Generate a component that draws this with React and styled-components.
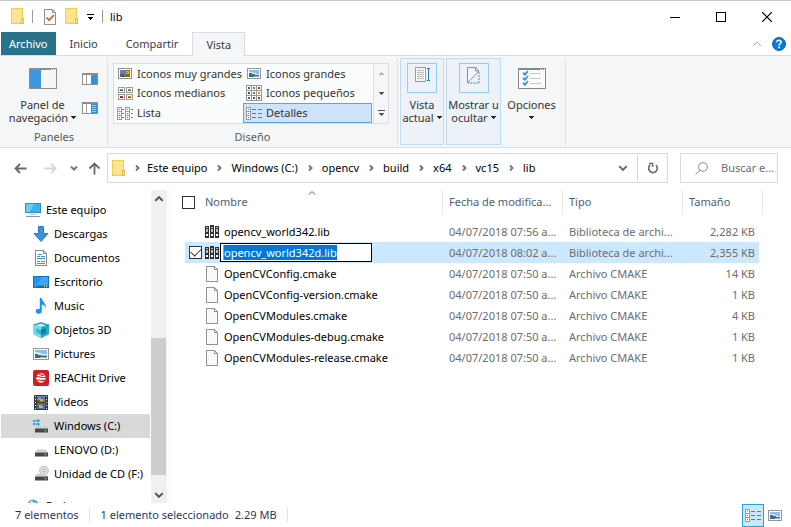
import React, { useEffect, useRef } from "react";
import styled, { createGlobalStyle, css } from "styled-components";

const Global = createGlobalStyle`
  * { box-sizing: border-box; }
  body { margin: 0; background: #fff; }
  body, button, input, table {
    font-family: "Noto Sans", "Open Sans", sans-serif;
    font-size: 11px;
    line-height: 16px;
    color: #000;
  }
  button { padding: 0; border: 0; background: none; }
  svg { display: block; flex: none; }
`;

/* ---------- icons ---------- */

const Icon = ({ w, h = w, children, smooth }) => (
  <svg width={w} height={h} viewBox={`0 0 ${w} ${h}`} fill="none" shapeRendering={smooth ? "auto" : "crispEdges"} aria-hidden="true">
    {children}
  </svg>
);

const FolderIcon = () => (
  <Icon w={14} h={17}>
    <path d="M0.5 0.5h11v11h1v4h-12z" fill="#fde58f" stroke="#f0cb5b" />
    <path d="M10.5 10.5h2v5h-2z" fill="#ffe79a" stroke="#e5bb49" />
    <path d="M1 13h9v2H1z" fill="#fbdf83" />
  </Icon>
);

const PropertiesIcon = () => (
  <Icon w={12} h={16} smooth>
    <path d="M0.5 0.5h8l3 3v12h-11z" fill="#f7f8f9" stroke="#8b8f94" />
    <path d="M8.5 0.5v3h3" stroke="#8b8f94" />
    <path d="M2.5 8.5l2.5 2.5 5-5" stroke="#e2562b" strokeWidth="1.7" />
  </Icon>
);

const Caret = ({ color = "#222" }) => (
  <Icon w={5} h={3}><path d="M0 0h5v1H4v1H3v1H2V2H1V1H0z" fill={color} /></Icon>
);

const CaretUp = () => (
  <Icon w={5} h={3}><path d="M2 0h1v1h1v1h1v1H0V2h1V1h1z" fill="#a9b0bb" /></Icon>
);

const CaretBar = ({ color = "#000" }) => (
  <Icon w={7} h={6}><path d="M0 0h7v1H0zM1 3h5v1H5v1H4v1H3V5H2V4H1z" fill={color} /></Icon>
);

const Chevron = ({ dir, color = "#777", size = 8, weight = 2 }) => {
  const d = {
    right: "M3 1.5L5.5 4L3 6.5",
    down: "M1 2.5L4 5.5L7 2.5",
    up: "M1 5.5L4 2.5L7 5.5",
  }[dir];
  return (
    <svg width={size} height={size} viewBox="0 0 8 8" fill="none" aria-hidden="true">
      <path d={d} stroke={color} strokeWidth={(weight * 8) / size} />
    </svg>
  );
};

const Arrow = ({ dir, color }) => (
  <Icon w={13} h={13} smooth>
    <path
      d={{ left: "M12.5 6.5H1.5M6 2L1.5 6.5L6 11", right: "M0.5 6.5H11.5M7 2L11.5 6.5L7 11", up: "M6.5 12.5V1.5M1.5 6.5L6.5 1.5L11.5 6.5" }[dir]}
      stroke={color}
      strokeWidth="1.8"
    />
  </Icon>
);

const MinIcon = () => <Icon w={10}><path d="M0 5h10v1H0z" fill="#000" /></Icon>;
const MaxIcon = () => <Icon w={10}><path d="M0.5 0.5h9v9h-9z" stroke="#000" /></Icon>;
const CloseIcon = () => <Icon w={10} smooth><path d="M0 0L10 10M10 0L0 10" stroke="#000" strokeWidth="1.2" /></Icon>;

const HelpIcon = () => (
  <Icon w={14} smooth>
    <circle cx="7" cy="7" r="6.5" fill="#0a7ad6" stroke="#0765b5" />
    <path d="M4.8 5.2C4.9 2.6 9.2 2.7 9.2 5.1C9.2 6.7 7.1 6.6 7.1 8.5" stroke="#fff" strokeWidth="1.5" />
    <path d="M6.2 9.6h1.8v1.7H6.2z" fill="#fff" />
  </Icon>
);

const NavPaneIcon = () => (
  <Icon w={28} h={21}>
    <path d="M0.5 0.5h27v20h-27z" fill="#f5f5f5" stroke="#8b8e91" />
    <path d="M0 0h28v2H0z" fill="#8b8e91" />
    <path d="M22 1h1M24 1h1M26 1h1" stroke="#fff" />
    <path d="M1 2h11v18H1z" fill="#3f97e0" />
    <path d="M12 2h1v18h-1z" fill="#fff" />
  </Icon>
);

const SmallPaneIcon = ({ lines }) => (
  <Icon w={16} h={12}>
    <path d="M0.5 0.5h15v11h-15z" fill="#fff" stroke="#8b8e91" />
    <path d="M0 0h16v2H0z" fill="#8b8e91" />
    <path d="M4 2h1v9H4z" fill="#a4a6a8" />
    <path d="M9 2h6v9H9z" fill="#3490df" />
    {lines && <path d="M10 3.5h4M10 5.5h4M10 7.5h4M10 9.5h4" stroke="#9fd0f7" />}
  </Icon>
);

const PictureIcon = ({ w = 14, h = 11 }) => (
  <Icon w={w} h={h}>
    <path d={`M0.5 0.5h${w - 1}v${h - 1}h-${w - 1}z`} fill="#fff" stroke="#969696" />
    <path d={`M2 2h${w - 4}v${h - 4}H2z`} fill="#8dbdf0" />
    <path d={`M2 4h4v1h3v1h${w - 11}v1H2z`} fill="#d6e8f5" />
    <path d={`M2 ${h - 6}h3v1h3v1h${w - 10}v2H2z`} fill="#3e6f7c" />
    <path d={`M7 ${h - 3}h${w - 9}v1H7z`} fill="#8fb3d6" />
  </Icon>
);

const XLargeIcon = () => (
  <Icon w={14} h={11}>
    <path d="M0.5 0.5h13v10h-13z" fill="#fff" stroke="#8e8e8e" />
    <path d="M2 2h5v7H2z" fill="#5b7fc9" />
    <path d="M7 2h5v7H7z" fill="#8c6a1d" />
    <path d="M2 6h4v2H2z" fill="#b3304a" />
    <path d="M3 8h4v1H3z" fill="#31652d" />
    <path d="M8 3h3v3H8z" fill="#e8b822" />
    <path d="M9 4h1v1H9zM7 7h2v1H7z" fill="#c2321d" />
  </Icon>
);

const MediumIcon = () => (
  <Icon w={15} h={13}>
    {[[0, 0, "#5e9be0", "#2f5f5f"], [8, 0, "#6fa3d8", "#4b7a3f"], [0, 7, "#c2361f", "#7a1f1f"], [8, 7, "#c98b1f", "#2f4f9f"]].map(([x, y, a, b]) => (
      <g key={`${x}-${y}`}>
        <path d={`M${x + 0.5} ${y + 0.5}h6v5h-6z`} fill="#fff" stroke="#9a9a9a" />
        <path d={`M${x + 2} ${y + 2}h3v1h-3z`} fill={a} />
        <path d={`M${x + 2} ${y + 3}h3v1h-3z`} fill={b} />
      </g>
    ))}
  </Icon>
);

const dots = ["#3b7a4d", "#3a8ee0", "#c7371f", "#44607a", "#4f8a35", "#c99a22", "#2a6fbb", "#5b5b2a", "#a33b22"];
const SmallIcon = () => (
  <Icon w={16}>
    {dots.map((c, i) => {
      const x = (i % 3) * 5, y = Math.floor(i / 3) * 5;
      return (
        <g key={i}>
          <path d={`M${x + 0.5} ${y + 0.5}h5v5h-5z`} fill="#fff" stroke="#9a9a9a" />
          <path d={`M${x + 2} ${y + 2}h2v2h-2z`} fill={c} />
        </g>
      );
    })}
  </Icon>
);

const Strip = ({ x }) =>
  ["#3f8a8a", "#3a8ee0", "#d8331c"].map((c, i) => (
    <g key={i}>
      <path d={`M${x + 0.5} ${i * 4 + 0.5}h4v4h-4z`} fill="#fff" stroke="#9a9a9a" />
      <path d={`M${x + 2} ${i * 4 + 2}h1v1h-1z`} fill={c} />
    </g>
  ));

const ListIcon = () => (
  <Icon w={16} h={13}>
    <Strip x={0} />
    <Strip x={8} />
    <path d="M5 2.5h2M5 6.5h2M5 10.5h2M14 2.5h2M14 6.5h2M14 10.5h2" stroke="#777" />
  </Icon>
);

const DetailsIcon = () => (
  <Icon w={16} h={13}>
    <Strip x={0} />
    <path d="M6 2.5h4M12 2.5h4M6 6.5h4M12 6.5h4M6 10.5h4M12 10.5h4" stroke="#777" />
  </Icon>
);

const CurrentViewIcon = () => (
  <Icon w={15} h={15}>
    <path d="M0.5 0.5h10v14h-10z" fill="#fff" stroke="#9a9a9a" />
    <path d="M2 3.5h7M2 5.5h7M2 7.5h7M2 9.5h7M2 11.5h7" stroke="#b3b3b3" />
    <path d="M4.5 1v13M7.5 1v13" stroke="#dcdcdc" />
    <path d="M13.5 1v13M12 1.5h3M12 13.5h3" stroke="#1e7fd0" />
  </Icon>
);

const HideIcon = () => (
  <Icon w={13} h={17} smooth>
    <path d="M0.5 0.5h8v3.5h3.5L0.5 16z" fill="#f5f5f5" stroke="#8c8c8c" />
    <path d="M8.5 0.5L12 4" stroke="#8c8c8c" />
    <path d="M12 5v11H1" stroke="#2d8fe2" strokeDasharray="2 1" />
  </Icon>
);

const OptionsIcon = () => (
  <Icon w={28} h={21}>
    <path d="M0.5 0.5h27v20h-27z" fill="#fafafa" stroke="#858789" />
    <path d="M0 0h28v2H0z" fill="#858789" />
    <path d="M22 1h1M24 1h1M26 1h1" stroke="#fff" />
    {[3, 8, 13].map((y) => (
      <g key={y}>
        <path d={`M5 ${y + 1}h3v3H5z`} fill="#a6d1f5" />
        <path d={`M5 ${y + 2}l2 2 3 -4`} stroke="#2d88d6" strokeWidth="1.4" shapeRendering="auto" />
        <path d={`M12 ${y + 2.5}h11`} stroke="#c8c8c8" />
      </g>
    ))}
  </Icon>
);

const RefreshIcon = () => (
  <Icon w={12} smooth>
    <path d="M9 3.2A4.3 4.3 0 1 1 3.2 3" stroke="#6f6f6f" strokeWidth="1.7" />
    <path d="M2 1.5h3.6v3.6" stroke="#6f6f6f" strokeWidth="1.5" />
  </Icon>
);

const SearchIcon = () => (
  <Icon w={13} smooth>
    <circle cx="8" cy="5" r="4.4" stroke="#8a8a8a" />
    <path d="M5 8.2L0.5 12.5" stroke="#8a8a8a" />
  </Icon>
);

const MonitorIcon = () => (
  <Icon w={16}>
    <path d="M0.5 1.5h15v9h-15z" fill="#35b3f2" stroke="#3b88b5" />
    <path d="M1 2h8L5 10H1z" fill="#6dcbfa" />
    <path d="M5 12h6v1H5z" fill="#b9c6cf" />
    <path d="M1 14h14v1H1z" fill="#7f9cae" />
  </Icon>
);

const DownloadIcon = () => (
  <Icon w={16} smooth>
    <path d="M5.5 0.5h5v7h4.5L8 15.5L1 7.5h4.5z" fill="#3792e2" stroke="#2a7cc8" />
  </Icon>
);

const DocumentsIcon = () => (
  <Icon w={12} h={16}>
    <path d="M0.5 0.5h8l3 3v12h-11z" fill="#fff" stroke="#8a8a8a" />
    <path d="M8.5 0v3.5H12" stroke="#8a8a8a" />
    <path d="M2 6.5h3M6 6.5h4M2 8.5h8M2 11.5h3M6 11.5h4M2 13.5h8" stroke="#3a97e0" />
    <path d="M3 4.5h4" stroke="#3a97e0" />
  </Icon>
);

const DesktopIcon = () => (
  <Icon w={16} h={12}>
    <path d="M0.5 0.5h15v11h-15z" fill="#1c97f3" stroke="#126fc0" />
    <path d="M9 1h6v8H4z" fill="#3ba9f9" />
    <path d="M1 10h14v1H1z" fill="#0b66b5" />
    <path d="M2 10h1v1H2zM11 10h1v1h-1zM13 10h1v1h-1z" fill="#fff" />
  </Icon>
);

const MusicIcon = () => (
  <Icon w={12} h={16} smooth>
    <path d="M4.8 0h2C7 4 11.5 4.5 10.8 10.5C10.5 8.2 9 7 6.8 6.5V13C6.8 16.7 0.8 16.7 0.8 13.3C0.8 10.8 3 10.4 4.8 11z" fill="#1593ee" />
  </Icon>
);

const CubeIcon = () => (
  <Icon w={16} smooth>
    <path d="M0 2.5L8 0L16 2.5V12L8 16L0 12z" fill="#1faac4" />
    <path d="M0 2.5L8 5V16L0 12z" fill="#7fd8e8" />
    <path d="M16 2.5L8 5V16L16 12z" fill="#20a7c2" />
    <path d="M3 3.5L8 1.5L13 3.5L8 5z" fill="#c7f0f6" />
    <path d="M3 6L8 8V13L3 10.5z" fill="#38b8d0" />
    <path d="M8 8L13 6V10.5L8 13z" fill="#0e7f9b" />
  </Icon>
);

const ReachIcon = () => (
  <Icon w={16} smooth>
    <rect width="16" height="16" rx="2" fill="#cf1f26" />
    <circle cx="8" cy="8" r="4.7" fill="#fff" />
    <path d="M2.5 7C6 5 8 9.5 13 7M4 10.5C7 8.5 9 12 12 10M6 3.5C6.5 6 9.5 4.5 11 5.5" stroke="#cf1f26" strokeWidth="1.1" />
  </Icon>
);

const VideoIcon = () => (
  <Icon w={14} h={15}>
    <path d="M0 0h14v15H0z" fill="#3d3d3d" />
    <path d="M3 1h8v6H3z" fill="#4c86d8" />
    <path d="M3 8h8v6H3z" fill="#3f73bf" />
    <path d="M5 3h4v3H5zM5 10h4v3H5z" fill="#e2ab2b" />
    <path d="M7 2h2v2H7zM8 9h2v2H8z" fill="#b8451e" />
    <path d="M3 5h3v2H3zM3 12h2v2H3z" fill="#3c7a3c" />
    <path d="M1.5 1v14M12.5 1v14" stroke="#e6e6e6" strokeDasharray="1 2" />
  </Icon>
);

const DriveIcon = ({ kind }) => (
  <Icon w={16} h={16} smooth>
    {kind === "windows" && <path d="M0 2h2.5v2H0zM3.5 1.500h3v2.5h-3zM0 5h2.5v2H0zM3.5 5h3v2.500h-3z" fill="#18a6ee" />}
    {kind === "cd" && (
      <>
        <circle cx="11" cy="4.5" r="4.3" fill="#dfe3e6" stroke="#a3a8ac" strokeWidth="0.8" />
        <circle cx="11" cy="4.5" r="1.5" fill="#fff" stroke="#999" strokeWidth="0.8" />
      </>
    )}
    <path d="M4 7.5h9L15 10.5H2z" fill="#cfd2d5" />
    <path d="M2 10.5h13v4H2z" fill="#45494d" />
    <path d="M11.5 12h2v1.2h-2z" fill="#45e05e" />
  </Icon>
);

const NetworkIcon = () => (
  <Icon w={12} h={14} smooth>
    <circle cx="6" cy="6" r="5.5" fill="#4aa3d2" />
    <path d="M3 3C5 1 7 3 6 5C4 6 3 5 3 3zM8 3l2 2" fill="#c4e6f4" stroke="#c4e6f4" />
  </Icon>
);

const LibraryIcon = () => (
  <Icon w={14} h={13}>
    {[0, 5, 10].map((x, i) => (
      <g key={x}>
        <path d={`M${x} ${i === 1 ? 0 : 1}h4v${i === 1 ? 13 : 12}h-4z`} fill="#303030" />
        <path d={`M${x + 1} 2h2v1h-2zM${x + 1} 4h2v3h-2z`} fill="#b9b9b9" />
        <path d={`M${x + 1} 9h2v2h-2z`} fill="#fff" />
      </g>
    ))}
  </Icon>
);

const FileIcon = () => (
  <Icon w={12} h={16}>
    <path d="M0.5 0.5h8l3 3v12h-11z" fill="#f9f9f9" stroke="#929292" />
    <path d="M8.5 0.5v3h3" stroke="#929292" />
  </Icon>
);

/* ---------- window frame ---------- */

const Window = styled.div`
  height: 100vh;
  display: flex;
  flex-direction: column;
  overflow: hidden;
  background: #fff;
  border-top: 1px solid #c9c9c9;
`;

const TitleBar = styled.header`
  display: flex;
  align-items: center;
  flex: none;
  height: 31px;
  padding: 0 1px 0 11px;
`;

const QuickButton = styled.button`
  display: flex;
  align-items: center;
  justify-content: center;
  width: ${(p) => p.$w}px;
  height: 24px;
`;

const Tick = styled.span`
  width: 1px;
  height: 13px;
  background: #9a9a9a;
  margin: ${(p) => p.$m};
`;

const Title = styled.h1`
  margin: 0;
  font-size: 11px;
  font-weight: 400;
  flex: 1;
`;

const CaptionButton = styled.button`
  display: flex;
  align-items: center;
  justify-content: center;
  width: 46px;
  height: 30px;
`;

const TabBar = styled.nav`
  display: flex;
  flex: none;
  height: 24px;
  padding-left: 1px;
  border-bottom: 1px solid #dadbdc;
`;

const Tab = styled.button`
  height: 23px;
  padding: 0 14px;
  color: #3b3b3b;
  ${(p) => p.$kind === "file" && css`
    padding: 0 8px;
    background: #2a7289;
    color: #fff;
  `}
  ${(p) => p.$kind === "active" && css`
    height: 24px;
    padding: 0 13px;
    background: #f5f6f7;
    border: 1px solid #dadbdc;
    border-bottom: 0;
  `}
`;

const TabTools = styled.div`
  display: flex;
  align-items: center;
  gap: 10px;
  margin-left: auto;
  padding-right: 5px;
  button { display: flex; }
`;

/* ---------- ribbon ---------- */

const Ribbon = styled.section`
  display: flex;
  flex: none;
  height: 92px;
  padding: 2px 0 0 1px;
  background: #f5f6f7;
  border-bottom: 1px solid #dadbdc;
`;

const Group = styled.div`
  display: flex;
  flex-direction: column;
  justify-content: space-between;
  margin-bottom: 2px;
  border-right: 1px solid #dfe1e4;
`;

const GroupRow = styled.div`
  display: flex;
  padding-left: 2px;
`;

const GroupName = styled.div`
  text-align: center;
  color: #5a5a5a;
`;

const BigButton = styled.button`
  display: flex;
  flex-direction: column;
  align-items: center;
  width: ${(p) => p.$w}px;
  height: ${(p) => (p.$boxed ? 87 : 66)}px;
  color: #333;
  line-height: 13px;
  border: 1px solid ${(p) => (p.$boxed ? "#c0dcf3" : "transparent")};
  background: ${(p) => (p.$boxed ? "#ecf2f7" : "transparent")};
`;

const BigIcon = styled.span`
  display: flex;
  flex: none;
  align-items: ${(p) => (p.$boxed ? "flex-start" : "center")};
  justify-content: center;
  width: 30px;
  height: 30px;
  margin: 4px 0 5px;
  padding-top: ${(p) => (p.$boxed ? 3 : 0)}px;
  border: 1px solid ${(p) => (p.$boxed ? "#99c9f2" : "transparent")};
`;

const Line = styled.span`
  display: flex;
  align-items: center;
  justify-content: center;
  gap: 3px;
  min-height: 13px;
  white-space: nowrap;
`;

const SmallStack = styled.div`
  display: flex;
  flex-direction: column;
  gap: 17px;
  padding: 15px 9px 0 0;
  button { display: flex; }
`;

const Gallery = styled.div`
  display: flex;
  margin: 5px 8px 0 5px;
  height: 61px;
  border: 1px solid #dcddde;
  background: #fbfcfc;
`;

const GalleryGrid = styled.div`
  display: grid;
  grid-template-columns: 129px 129px;
  grid-template-rows: 19px 20px 20px;
`;

const GalleryItem = styled.button`
  display: flex;
  align-items: center;
  gap: 4px;
  padding-left: 2px;
  color: #333;
  white-space: nowrap;
  border: 1px solid ${(p) => (p.$on ? "#62a2e4" : "transparent")};
  background: ${(p) => (p.$on ? "#cde3fb" : "transparent")};
`;

const GalleryIcon = styled.span`
  display: flex;
  flex: none;
  justify-content: center;
  width: 16px;
`;

const GalleryScroll = styled.div`
  display: grid;
  grid-template-rows: 19px 20px 20px;
  width: 15px;
  margin-left: 1px;
  border-left: 1px solid #dcddde;
  background: #f5f6f7;
  button { display: flex; align-items: center; justify-content: center; }
`;

const ButtonGroup = styled.div`
  display: flex;
  gap: 2px;
  margin-bottom: 2px;
  padding: 0 5px 0 2px;
  border-right: 1px solid #dfe1e4;
`;

/* ---------- address row ---------- */

const AddressRow = styled.div`
  display: flex;
  align-items: center;
  flex: none;
  padding: 5px 13px 7px 14px;
`;

const NavButtons = styled.div`
  display: flex;
  align-items: center;
  width: 93px;
  button { display: flex; }
`;

const NavGap = styled.span`
  width: ${(p) => p.$w}px;
`;

const AddressBox = styled.div`
  display: flex;
  flex: 1;
  min-width: 0;
  height: 30px;
  border: 1px solid #d9d9d9;
`;

const Crumbs = styled.ol`
  display: flex;
  align-items: center;
  flex: 1;
  margin: 0;
  padding: 0 0 0 4px;
  list-style: none;
  li { display: flex; align-items: center; white-space: nowrap; }
  a { color: #000; text-decoration: none; }
`;

const CrumbSep = styled.span`
  display: flex;
  justify-content: center;
  width: ${(p) => p.$w || 24}px;
`;

const AddressButton = styled.button`
  display: flex;
  align-items: center;
  justify-content: center;
  width: 30px;
  border-left: 1px solid ${(p) => (p.$line ? "#d9d9d9" : "transparent")};
`;

const SearchBox = styled.label`
  display: flex;
  align-items: center;
  gap: 13px;
  width: 98px;
  height: 30px;
  margin-left: 12px;
  padding: 0 3px 0 14px;
  border: 1px solid #d9d9d9;
`;

const SearchInput = styled.input`
  flex: 1;
  min-width: 0;
  padding: 0;
  border: 0;
  outline: 0;
  &::placeholder { color: #6d6d6d; opacity: 1; }
`;

/* ---------- body ---------- */

const Body = styled.div`
  display: flex;
  flex: 1;
  min-height: 0;
`;

const Tree = styled.ul`
  flex: none;
  width: 151px;
  margin: 0;
  padding: 8px 1px 0;
  list-style: none;
  overflow: hidden;
`;

const TreeItem = styled.li`
  display: flex;
  align-items: center;
  height: 24px;
  padding-left: ${(p) => (p.$root ? 24 : 32)}px;
  margin-top: ${(p) => (p.$gap ? 8 : 0)}px;
  gap: 5px;
  white-space: nowrap;
  background: ${(p) => (p.$on ? "#d9d9d9" : "transparent")};
`;

const TreeIcon = styled.span`
  display: flex;
  align-items: center;
  justify-content: center;
  width: 16px;
  height: 16px;
`;

const ScrollBar = styled.div`
  display: flex;
  flex-direction: column;
  flex: none;
  width: 16px;
  background: #f0f0f0;
  button { display: flex; align-items: center; justify-content: center; height: 17px; }
`;

const Track = styled.div`
  display: flex;
  flex-direction: column;
  flex: 1;
`;

const Thumb = styled.div`
  flex: 0 0 ${(p) => p.$size}%;
  margin-top: auto;
  margin-bottom: 11px;
  width: 15px;
  background: #cdcdcd;
`;

const Main = styled.main`
  flex: 1;
  min-width: 0;
  margin-left: 2px;
  padding: 0 28px 0 12px;
  border-left: 1px solid #f3f3f3;
`;

const FileTable = styled.table`
  width: 100%;
  table-layout: fixed;
  border-collapse: separate;
  border-spacing: 0;
  th { padding: 0 0 7px; font-weight: 400; text-align: left; }
`;

const Col = styled.col`
  width: ${(p) => (p.$w ? `${p.$w}px` : "auto")};
`;

const Head = styled.div`
  position: relative;
  display: flex;
  align-items: center;
  gap: 10px;
  height: 24px;
  padding-left: ${(p) => (p.$first ? 0 : 6)}px;
  color: #4c607a;
  white-space: nowrap;
  border-right: 1px solid #e5e5e5;
`;

const SortMark = styled.span`
  position: absolute;
  top: -1px;
  left: 50%;
  margin-left: -4px;
`;

const Check = styled.input`
  appearance: none;
  flex: none;
  width: 13px;
  height: 13px;
  margin: 0;
  border: 1px solid #333;
  background: #fff;
  &:checked {
    display: grid;
    place-items: center;
  }
  &:checked::after {
    content: "";
    width: 9px;
    height: 5px;
    margin-bottom: 3px;
    border: solid #333;
    border-width: 0 0 1px 1px;
    transform: rotate(-45deg);
  }
`;

const Row = styled.tr`
  height: 21px;
  td {
    padding: 0 0 0 6px;
    color: #6d6d6d;
    white-space: nowrap;
    overflow: hidden;
    background-color: ${(p) => (p.$on ? "#cce8ff" : "transparent")};
    background-clip: padding-box;
  }
  td:first-child {
    padding: 0 0 0 4px;
    border-left: 3px solid transparent;
  }
  td:last-child {
    padding: 0 4px 0 0;
    text-align: right;
    border-right: 4px solid transparent;
  }
`;

const NameCell = styled.div`
  display: flex;
  align-items: center;
  height: 21px;
  color: #000;
`;

const CheckSlot = styled.span`
  display: flex;
  width: 16px;
`;

const FileIconSlot = styled.span`
  display: flex;
  justify-content: center;
  width: 14px;
  margin-right: 1px;
`;

const FileName = styled.span`
  padding-left: 4px;
`;

const RenameInput = styled.input`
  width: 152px;
  height: 19px;
  padding: 0 3px;
  border: 1px solid #000;
  border-radius: 0;
  outline: 0;
  background: #fff linear-gradient(#f08a24, #f08a24) 2px 1px / 1px 15px no-repeat;
  &::selection { background: #0078d7; color: #fff; }
`;

const StatusBar = styled.footer`
  display: flex;
  align-items: center;
  flex: none;
  height: 24px;
  padding: 0 5px 0 15px;
  color: #1f3a5f;
  white-space: nowrap;
`;

const StatusTick = styled.span`
  width: 1px;
  height: 14px;
  margin: ${(p) => p.$m};
  background: #e3e3e3;
`;

const StatusText = styled.span`
  margin-right: ${(p) => p.$r || 0}px;
`;

const ViewButtons = styled.div`
  display: flex;
  margin-left: auto;
`;

const ViewButton = styled.button`
  display: flex;
  align-items: center;
  justify-content: center;
  width: 22px;
  height: 23px;
  border: 1px solid ${(p) => (p.$on ? "#26a0da" : "transparent")};
  background: ${(p) => (p.$on ? "#cce8f6" : "transparent")};
`;

/* ---------- data ---------- */

const layouts = [
  ["Iconos muy grandes", <XLargeIcon />],
  ["Iconos grandes", <PictureIcon />],
  ["Iconos medianos", <MediumIcon />],
  ["Iconos pequeños", <SmallIcon />],
  ["Lista", <ListIcon />],
  ["Detalles", <DetailsIcon />],
];

const crumbs = ["Este equipo", "Windows (C:)", "opencv", "build", "x64", "vc15", "lib"];

const tree = [
  { name: "Este equipo", icon: <MonitorIcon />, root: true },
  { name: "Descargas", icon: <DownloadIcon /> },
  { name: "Documentos", icon: <DocumentsIcon /> },
  { name: "Escritorio", icon: <DesktopIcon /> },
  { name: "Music", icon: <MusicIcon /> },
  { name: "Objetos 3D", icon: <CubeIcon /> },
  { name: "Pictures", icon: <PictureIcon w={16} h={12} /> },
  { name: "REACHit Drive", icon: <ReachIcon /> },
  { name: "Videos", icon: <VideoIcon /> },
  { name: "Windows (C:)", icon: <DriveIcon kind="windows" />, on: true },
  { name: "LENOVO (D:)", icon: <DriveIcon /> },
  { name: "Unidad de CD (F:)", icon: <DriveIcon kind="cd" /> },
  { name: "Red", icon: <NetworkIcon />, root: true, gap: true },
];

const files = [
  { name: "opencv_world342.lib", date: "04/07/2018 07:56 a...", type: "Biblioteca de archi...", size: "2,282 KB", lib: true },
  { name: "opencv_world342d.lib", date: "04/07/2018 08:02 a...", type: "Biblioteca de archi...", size: "2,355 KB", lib: true, on: true },
  { name: "OpenCVConfig.cmake", date: "04/07/2018 07:50 a...", type: "Archivo CMAKE", size: "14 KB" },
  { name: "OpenCVConfig-version.cmake", date: "04/07/2018 07:50 a...", type: "Archivo CMAKE", size: "1 KB" },
  { name: "OpenCVModules.cmake", date: "04/07/2018 07:50 a...", type: "Archivo CMAKE", size: "4 KB" },
  { name: "OpenCVModules-debug.cmake", date: "04/07/2018 07:50 a...", type: "Archivo CMAKE", size: "1 KB" },
  { name: "OpenCVModules-release.cmake", date: "04/07/2018 07:50 a...", type: "Archivo CMAKE", size: "1 KB" },
];

function RenameField({ name }) {
  const ref = useRef(null);
  useEffect(() => {
    ref.current.focus();
    ref.current.select();
  }, []);
  return <RenameInput ref={ref} defaultValue={name} aria-label="Nombre de archivo" spellCheck={false} />;
}

export default function App() {
  return (
    <>
      <Global />
      <Window>
        <TitleBar>
          <FolderIcon />
          <Tick $m="0 11px 0 7px" />
          <QuickButton $w={12} aria-label="Propiedades"><PropertiesIcon /></QuickButton>
          <QuickButton $w={32} aria-label="Nueva carpeta"><FolderIcon /></QuickButton>
          <QuickButton $w={5} aria-label="Personalizar barra"><CaretBar /></QuickButton>
          <Tick $m="0 7px 0 9px" />
          <Title>lib</Title>
          <CaptionButton aria-label="Minimizar"><MinIcon /></CaptionButton>
          <CaptionButton aria-label="Maximizar"><MaxIcon /></CaptionButton>
          <CaptionButton aria-label="Cerrar"><CloseIcon /></CaptionButton>
        </TitleBar>

        <TabBar>
          <Tab $kind="file">Archivo</Tab>
          <Tab>Inicio</Tab>
          <Tab>Compartir</Tab>
          <Tab $kind="active">Vista</Tab>
          <TabTools>
            <button aria-label="Minimizar la cinta"><Chevron dir="up" color="#9a9a9a" size={10} weight={1} /></button>
            <button aria-label="Ayuda"><HelpIcon /></button>
          </TabTools>
        </TabBar>

        <Ribbon>
          <Group>
            <GroupRow>
              <BigButton $w={79}>
                <BigIcon><NavPaneIcon /></BigIcon>
                <Line>Panel de</Line>
                <Line>navegación <Caret /></Line>
              </BigButton>
              <SmallStack>
                <button aria-label="Panel de vista previa"><SmallPaneIcon /></button>
                <button aria-label="Panel de detalles"><SmallPaneIcon lines /></button>
              </SmallStack>
            </GroupRow>
            <GroupName>Paneles</GroupName>
          </Group>
          <Group>
            <Gallery>
              <GalleryGrid>
                {layouts.map(([name, icon]) => (
                  <GalleryItem key={name} $on={name === "Detalles"}>
                    <GalleryIcon>{icon}</GalleryIcon>
                    {name}
                  </GalleryItem>
                ))}
              </GalleryGrid>
              <GalleryScroll>
                <button aria-label="Subir"><CaretUp /></button>
                <button aria-label="Bajar"><Caret color="#44546e" /></button>
                <button aria-label="Más"><CaretBar color="#44546e" /></button>
              </GalleryScroll>
            </Gallery>
            <GroupName>Diseño</GroupName>
          </Group>
          <ButtonGroup>
            <BigButton $w={44} $boxed>
              <BigIcon $boxed><CurrentViewIcon /></BigIcon>
              <Line>Vista</Line>
              <Line>actual <Caret /></Line>
            </BigButton>
            <BigButton $w={55} $boxed>
              <BigIcon $boxed><HideIcon /></BigIcon>
              <Line>Mostrar u</Line>
              <Line>ocultar <Caret /></Line>
            </BigButton>
            <BigButton $w={57}>
              <BigIcon><OptionsIcon /></BigIcon>
              <Line>Opciones</Line>
              <Line><Caret /></Line>
            </BigButton>
          </ButtonGroup>
        </Ribbon>

        <AddressRow>
          <NavButtons>
            <button aria-label="Atrás"><Arrow dir="left" color="#6a6a6a" /></button>
            <NavGap $w={17} />
            <button aria-label="Adelante"><Arrow dir="right" color="#d5d5d5" /></button>
            <NavGap $w={13} />
            <button aria-label="Recientes"><Chevron dir="down" color="#777" /></button>
            <NavGap $w={10} />
            <button aria-label="Subir un nivel"><Arrow dir="up" color="#6a6a6a" /></button>
          </NavButtons>
          <AddressBox>
            <Crumbs>
              <li><FolderIcon /></li>
              {crumbs.map((c, i) => (
                <li key={c}>
                  <CrumbSep $w={i === 0 ? 21 : 24}><Chevron dir="right" /></CrumbSep>
                  <a href="#carpeta">{c}</a>
                </li>
              ))}
            </Crumbs>
            <AddressButton aria-label="Ubicaciones anteriores"><Chevron dir="down" size={10} color="#666" /></AddressButton>
            <AddressButton $line aria-label="Actualizar"><RefreshIcon /></AddressButton>
          </AddressBox>
          <SearchBox>
            <SearchIcon />
            <SearchInput placeholder="Buscar e..." aria-label="Buscar" />
          </SearchBox>
        </AddressRow>

        <Body>
          <Tree>
            {tree.map((t) => (
              <TreeItem key={t.name} $root={t.root} $gap={t.gap} $on={t.on}>
                <TreeIcon>{t.icon}</TreeIcon>
                {t.name}
              </TreeItem>
            ))}
          </Tree>
          <ScrollBar>
            <button aria-label="Desplazar arriba"><Chevron dir="up" size={10} color="#505050" /></button>
            <Track><Thumb $size={49} /></Track>
            <button aria-label="Desplazar abajo"><Chevron dir="down" size={10} color="#505050" /></button>
          </ScrollBar>
          <Main>
            <FileTable>
              <colgroup>
                <Col />
                <Col $w={120} />
                <Col $w={120} />
                <Col $w={80} />
              </colgroup>
              <thead>
                <tr>
                  <th>
                    <Head $first>
                      <Check type="checkbox" aria-label="Seleccionar todo" />
                      Nombre
                      <SortMark><Chevron dir="up" size={8} weight={1} color="#555" /></SortMark>
                    </Head>
                  </th>
                  <th><Head>Fecha de modifica...</Head></th>
                  <th><Head>Tipo</Head></th>
                  <th><Head>Tamaño</Head></th>
                </tr>
              </thead>
              <tbody>
                {files.map((f) => (
                  <Row key={f.name} $on={f.on}>
                    <td>
                      <NameCell>
                        <CheckSlot>
                          {f.on && <Check type="checkbox" defaultChecked aria-label={f.name} />}
                        </CheckSlot>
                        <FileIconSlot>{f.lib ? <LibraryIcon /> : <FileIcon />}</FileIconSlot>
                        {f.on ? <RenameField name={f.name} /> : <FileName>{f.name}</FileName>}
                      </NameCell>
                    </td>
                    <td>{f.date}</td>
                    <td>{f.type}</td>
                    <td>{f.size}</td>
                  </Row>
                ))}
              </tbody>
            </FileTable>
          </Main>
        </Body>

        <StatusBar>
          <StatusText>7 elementos</StatusText>
          <StatusTick $m="0 11px 0 10px" />
          <StatusText $r={6}>1 elemento seleccionado</StatusText>
          <StatusText>2.29 MB</StatusText>
          <StatusTick $m="0 0 0 10px" />
          <ViewButtons>
            <ViewButton $on aria-label="Detalles"><DetailsIcon /></ViewButton>
            <ViewButton aria-label="Iconos grandes"><PictureIcon /></ViewButton>
          </ViewButtons>
        </StatusBar>
      </Window>
    </>
  );
}
